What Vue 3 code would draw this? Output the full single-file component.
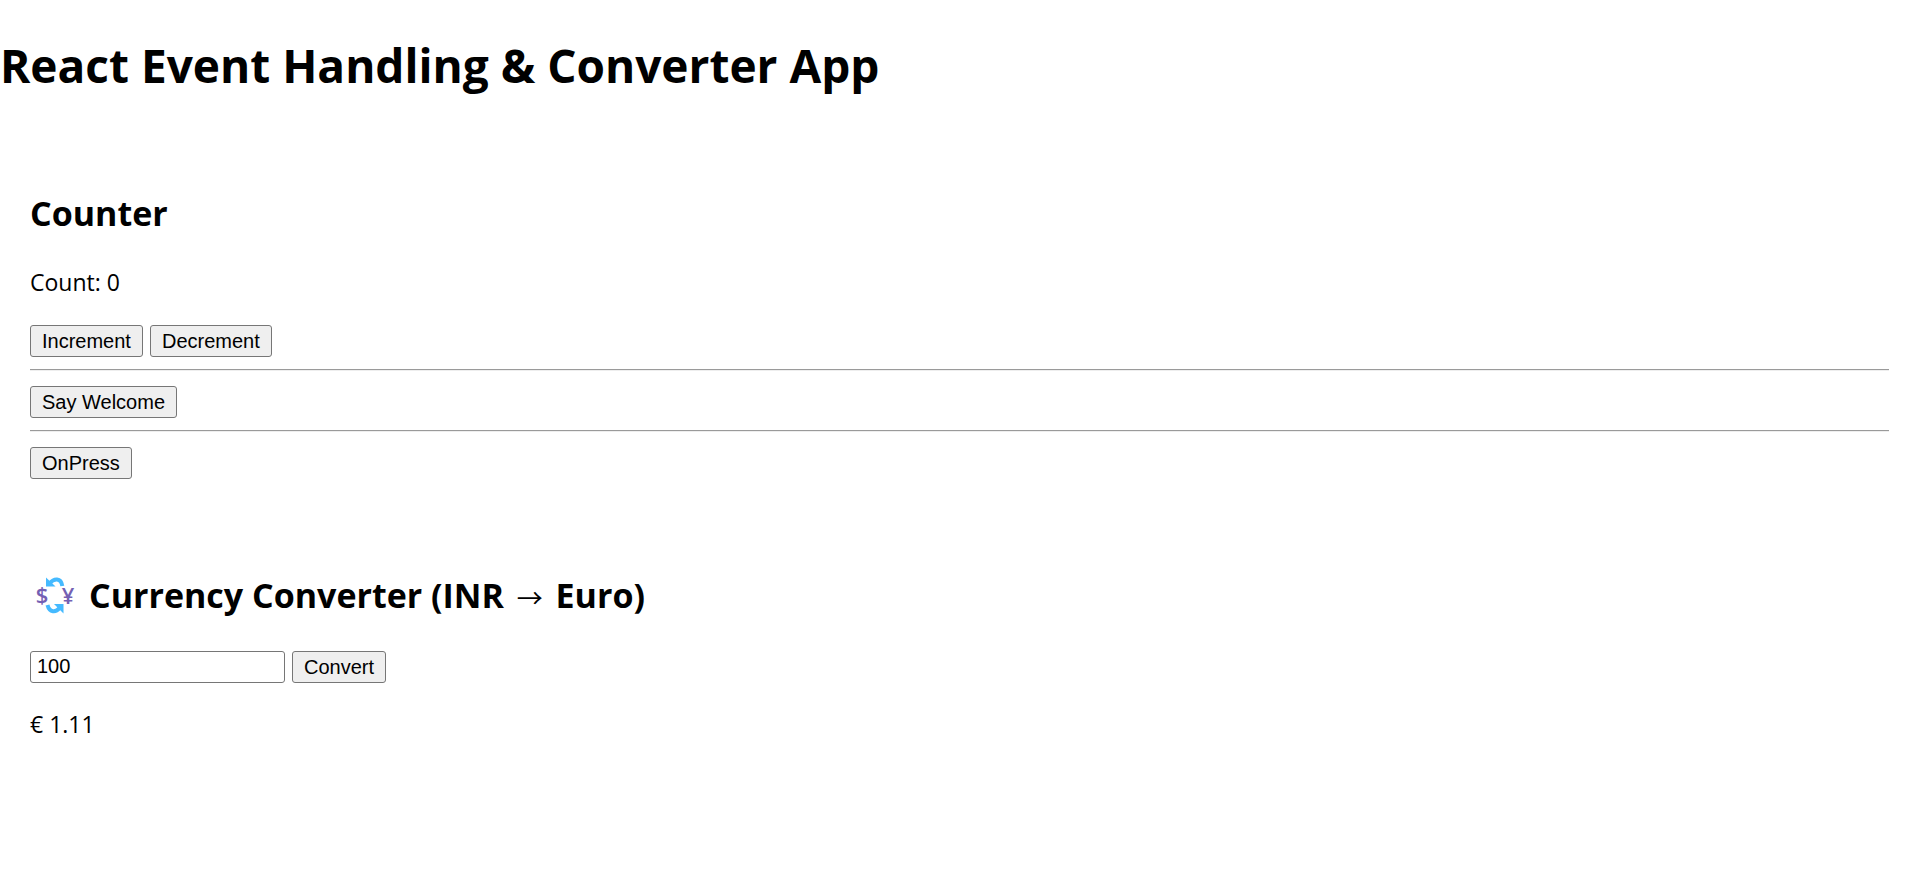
<script setup>
import { ref } from 'vue'

const RATE = 0.0111

const count = ref(0)
const amount = ref('100')
const euros = ref('1.11')

function convert() {
  euros.value = (Number(amount.value) * RATE).toFixed(2)
}

function say(message) {
  window.alert(message)
}
</script>

<template>
  <main>
    <h1>React Event Handling &amp; Converter App</h1>

    <section class="panel">
      <h2>Counter</h2>
      <p>Count: {{ count }}</p>
      <div class="row">
        <button type="button" @click="count++">Increment</button>
        <button type="button" @click="count--">Decrement</button>
      </div>
      <hr />
      <div class="row">
        <button type="button" @click="say('Welcome')">Say Welcome</button>
      </div>
      <hr />
      <div class="row">
        <button type="button" @click="say('I was clicked')">OnPress</button>
      </div>
    </section>

    <section class="panel">
      <h2 id="converter-title" class="with-icon">
        <svg class="exchange" viewBox="0 0 48 48" aria-hidden="true">
          <g fill="none" stroke="#45baff" stroke-width="4">
            <path d="M19.500 12.500C24 7 31 6.500 32.300 15" />
            <path d="M17.500 34C19.500 42 26 41.500 29.500 37" />
          </g>
          <g fill="#45baff">
            <path d="M16 6.500v9h9.500z" />
            <path d="M33.500 42.500v-9.500H24z" />
          </g>
          <g class="coins">
            <text x="12" y="32" text-anchor="middle">$</text>
            <text x="38" y="33" text-anchor="middle">¥</text>
          </g>
        </svg>
        <span>Currency Converter (INR <span class="arrow">→</span> Euro)</span>
      </h2>
      <form class="row" @submit.prevent="convert">
        <input v-model="amount" type="text" aria-labelledby="converter-title" />
        <button type="submit">Convert</button>
      </form>
      <p>€ {{ euros }}</p>
    </section>
  </main>
</template>

<style>
body {
  margin: 0;
  background: #fff;
}
</style>

<style scoped>
main {
  display: flow-root;
  color: #000;
  font-family: 'Segoe UI', 'Open Sans', 'Noto Sans', sans-serif;
  font-size: 23px;
  line-height: 32px;
}

h1 {
  margin: 32px 0 30px;
  font-size: 46px;
  line-height: 66px;
}

.panel {
  display: flow-root;
  padding: 30px;
}

h2 {
  margin: 30px 0 28px;
  font-size: 34px;
  line-height: 50px;
}

.with-icon {
  display: flex;
  align-items: center;
  gap: 11px;
}

.exchange {
  width: 48px;
  height: 48px;
}

.coins {
  fill: #7460b3;
  font-family: 'Open Sans', 'Noto Sans', sans-serif;
  font-size: 22px;
  font-weight: 600;
}

.arrow {
  margin: 0 4px;
  font-family: 'Noto Sans CJK JP', sans-serif;
  font-size: 26px;
  font-weight: 400;
  line-height: 1;
}

p {
  margin: 24px 0;
}

.row {
  display: flex;
  gap: 7px;
  padding: 3px 0 1px;
}

button,
input {
  box-sizing: border-box;
  height: 32px;
  border: 1px solid #767676;
  border-radius: 3px;
  color: #000;
  font-family: 'Liberation Sans', Arial, sans-serif;
  font-size: 20px;
  line-height: 24px;
}

button {
  padding: 0 11px 1px;
  background: #efefef;
}

input {
  width: 255px;
  padding: 0 6px 1px;
  background: #fff;
}

hr {
  height: 2px;
  margin: 11px 0 12px;
  border: 0;
  border-top: 1px solid #9a9a9a;
  border-bottom: 1px solid #eee;
  box-sizing: border-box;
}
</style>
